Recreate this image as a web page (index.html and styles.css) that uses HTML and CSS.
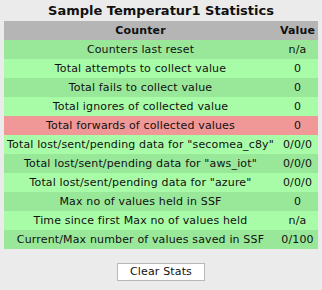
FILE: index.html
```html
<!DOCTYPE html>
<html>
<head>
<meta charset="utf-8">
<link rel="stylesheet" href="styles.css">
</head>
<body>
<div class="page">
  <h1 class="title">Sample Temperatur1 Statistics</h1>
  <table class="stats">
    <thead>
      <tr class="head"><th class="counter">Counter</th><th class="value">Value</th></tr>
    </thead>
    <tbody>
      <tr class="dark"><td>Counters last reset</td><td>n/a</td></tr>
      <tr class="light"><td>Total attempts to collect value</td><td>0</td></tr>
      <tr class="dark"><td>Total fails to collect value</td><td>0</td></tr>
      <tr class="light"><td>Total ignores of collected value</td><td>0</td></tr>
      <tr class="alert"><td>Total forwards of collected values</td><td>0</td></tr>
      <tr class="light"><td>Total lost/sent/pending data for "secomea_c8y"</td><td>0/0/0</td></tr>
      <tr class="dark"><td>Total lost/sent/pending data for "aws_iot"</td><td>0/0/0</td></tr>
      <tr class="light"><td>Total lost/sent/pending data for "azure"</td><td>0/0/0</td></tr>
      <tr class="dark"><td>Max no of values held in SSF</td><td>0</td></tr>
      <tr class="light"><td>Time since first Max no of values held</td><td>n/a</td></tr>
      <tr class="dark"><td>Current/Max number of values saved in SSF</td><td>0/100</td></tr>
    </tbody>
  </table>
  <div class="actions"><button class="btn" type="button">Clear Stats</button></div>
</div>
</body>
</html>
```
FILE: styles.css
```css
html, body {
  margin: 0;
  padding: 0;
  background: #ebebeb;
}
.page {
  padding: 0 4px 0 4px;
  font-family: "DejaVu Sans", sans-serif;
  font-size: 11px;
  letter-spacing: 0.15px;
  color: #111;
}
.title {
  margin: 0;
  height: 21px;
  line-height: 21px;
  font-family: "DejaVu Sans", sans-serif;
  font-size: 13px;
  letter-spacing: 0;
  font-weight: bold;
  text-align: center;
  color: #111;
}
.stats {
  width: 314px;
  border-collapse: collapse;
  border-spacing: 0;
}
.stats th, .stats td {
  height: 19px;
  padding: 0 2px;
  text-align: center;
  vertical-align: middle;
  line-height: 19px;
  white-space: nowrap;
}
.stats th {
  font-weight: bold;
}
.stats .value {
  width: 37px;
}
.head { background: #b5b5b5; }
.dark { background: #99e899; }
.light { background: #a8fca8; }
.alert { background: #f09797; }
.actions {
  display: flex;
  justify-content: center;
  padding-top: 14px;
}
.btn {
  width: 88px;
  height: 18px;
  padding: 0;
  margin: 0;
  background: #fff;
  border: 1px solid #b8b8b8;
  border-radius: 0;
  font-family: "DejaVu Sans", sans-serif;
  font-size: 11px;
  letter-spacing: 0.15px;
  color: #111;
  line-height: 16px;
}
```
